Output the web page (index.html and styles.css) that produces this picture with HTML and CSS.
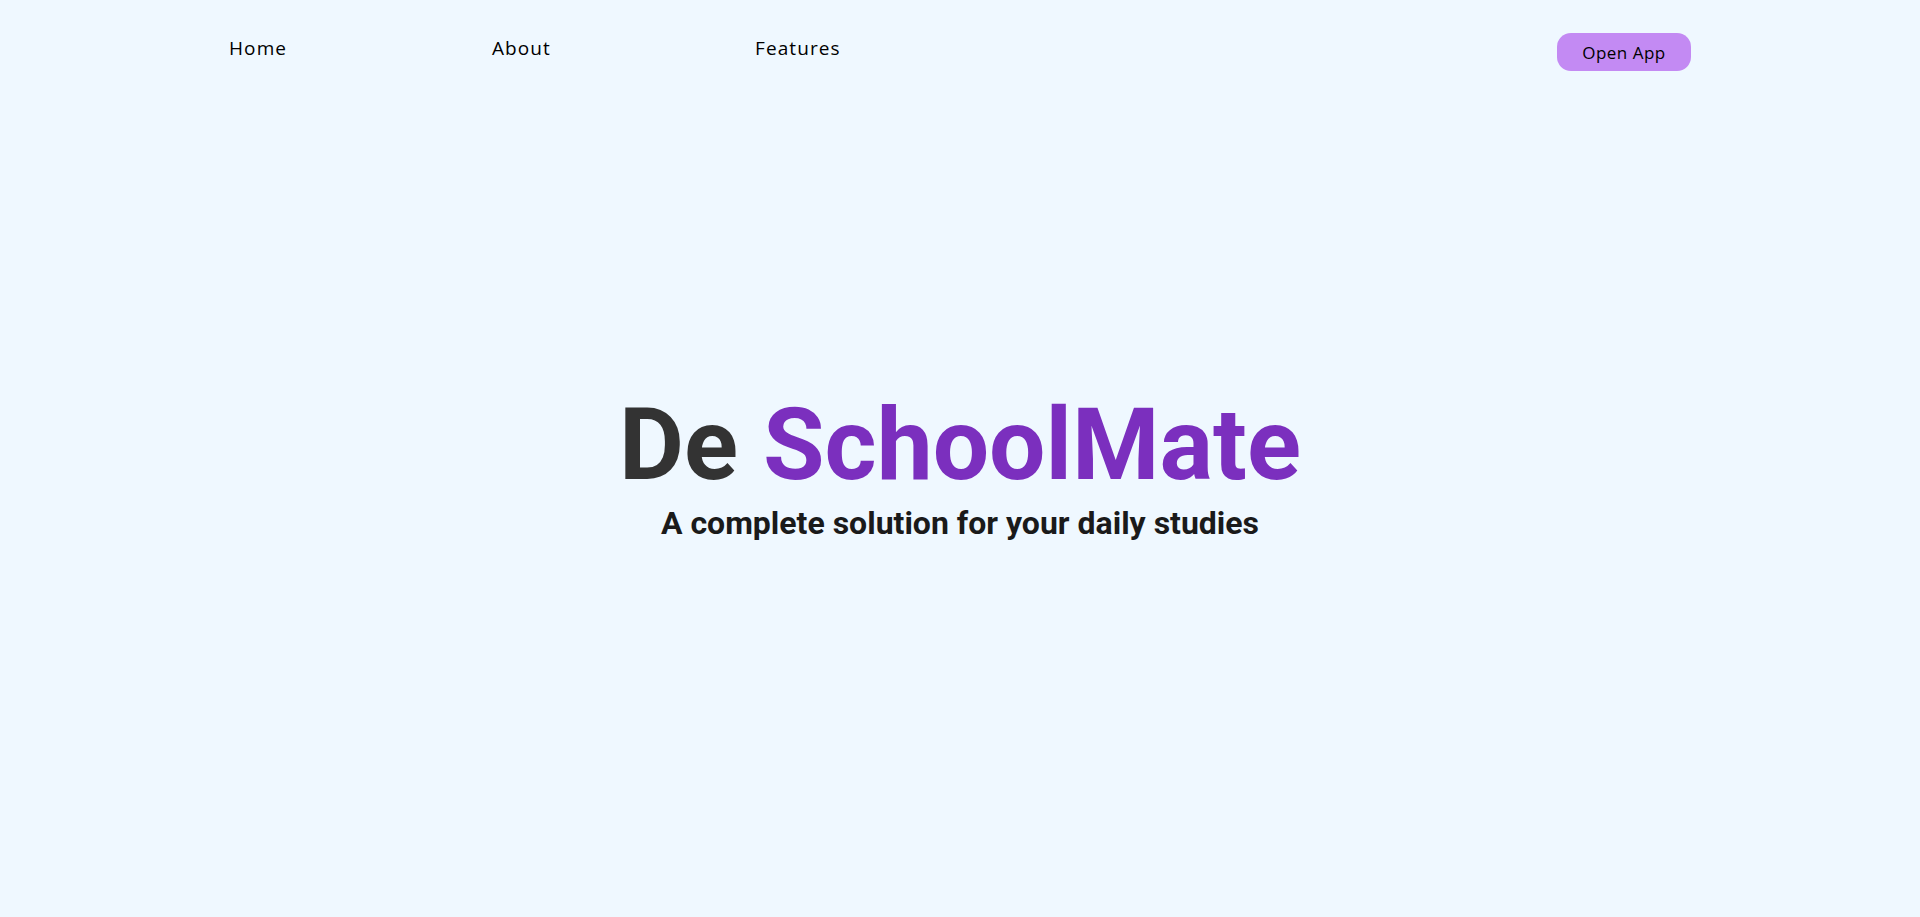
FILE: index.html
```html
<!DOCTYPE html>
<html lang="en">
<head>
<meta charset="utf-8">
<title>De SchoolMate</title>
<link rel="stylesheet" href="styles.css">
</head>
<body>
<header class="topbar">
  <nav class="nav-links">
    <a class="nav-link" href="#">Home</a>
    <a class="nav-link" href="#">About</a>
    <a class="nav-link" href="#">Features</a>
  </nav>
  <a class="open-btn" href="#">Open App</a>
</header>
<main class="hero">
  <h1 class="hero-title"><span class="dark">De</span> <span class="accent">SchoolMate</span></h1>
  <p class="hero-sub">A complete solution for your daily studies</p>
</main>
</body>
</html>
```

FILE: styles.css
```css
html, body {
  margin: 0;
  padding: 0;
}
body {
  background: #eff8ff;
  height: 917px;
  overflow: hidden;
  font-family: "Open Sans", "Liberation Sans", sans-serif;
}
.topbar {
  width: 1462px;
  margin: 0 auto;
  display: flex;
  justify-content: space-between;
  align-items: flex-start;
  padding-top: 33px;
}
.nav-links {
  display: flex;
  padding-top: 2px;
}
.nav-link {
  width: 263px;
  color: #000;
  text-decoration: none;
  font-size: 19px;
  letter-spacing: 1.1px;
  line-height: 26px;
}
.open-btn {
  display: flex;
  align-items: center;
  justify-content: center;
  width: 134px;
  height: 38px;
  border-radius: 14px;
  background: #c38af3;
  color: #000;
  text-decoration: none;
  font-size: 17px;
  letter-spacing: 0.5px;
}
.hero {
  display: flex;
  flex-direction: column;
  align-items: center;
  padding-top: 316px;
  font-family: Roboto, "Liberation Sans", sans-serif;
}
.hero-title {
  margin: 0;
  font-size: 100px;
  font-weight: 700;
  line-height: 116px;
}
.dark { color: #333333; }
.accent { color: #7b2fbe; }
.hero-sub {
  margin: 0;
  font-size: 32px;
  font-weight: 700;
  color: #1a1a1a;
  line-height: 40px;
}
```
